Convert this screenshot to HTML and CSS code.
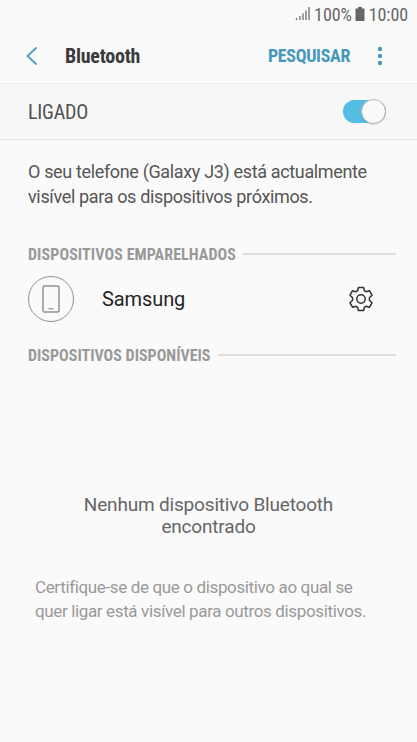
FILE: index.html
```html
<!DOCTYPE html>
<html lang="pt">
<head>
    <meta charset="UTF-8">
    <meta name="viewport" content="width=device-width, initial-scale=1.0">
    <title>Bluetooth</title>
    <link rel="stylesheet" href="styles.css">
</head>
<body>

<div class="status-bar">
    <svg class="signal" width="15" height="14" viewBox="0 0 15 14">
        <path d="M1.500 11v2M5 9v4M8 6.500v6.500M11 3.500v9.500M14 0v13" stroke="#777" stroke-width="1.400"/>
    </svg>
    <span class="percent">100%</span>
    <svg class="battery" width="10" height="14" viewBox="0 0 10 14">
        <path d="M3 0h4v1.500h2.500v12.500h-9v-12.500H3z" fill="#666"/>
    </svg>
    <span class="clock">10:00</span>
</div>

<header>
    <svg class="back" width="12" height="20" viewBox="0 0 12 20">
        <path d="M10.500 1.500L1.500 10l9 8.500" fill="none" stroke="#4a9fc2" stroke-width="1.800"/>
    </svg>
    <h1>Bluetooth</h1>
    <span class="search">PESQUISAR</span>
    <svg class="more" width="6" height="20" viewBox="0 0 6 20">
        <g fill="#4698ba">
            <circle cx="3" cy="3" r="2.200"/>
            <circle cx="3" cy="10" r="2.200"/>
            <circle cx="3" cy="17" r="2.200"/>
        </g>
    </svg>
</header>

<div class="switch-row">
    <span class="state">LIGADO</span>
    <div class="switch"><div class="knob"></div></div>
</div>

<main>
    <p class="info">O seu telefone (Galaxy J3) está actualmente<br>visível para os dispositivos próximos.</p>

    <h2 class="paired"><span>DISPOSITIVOS EMPARELHADOS</span></h2>
    <div class="device">
        <div class="device-icon">
            <svg width="18" height="28" viewBox="0 0 18 28">
                <rect x="1" y="1" width="16" height="26" rx="1.500" fill="none" stroke="#929292" stroke-width="1.500"/>
                <path d="M6.500 23.700h5" stroke="#929292" stroke-width="1.200"/>
            </svg>
        </div>
        <span class="device-name">Samsung</span>
        <svg class="gear" width="26" height="26" viewBox="0 0 26 26" fill="none" stroke="#303030" stroke-width="1.500" stroke-linejoin="round">
            <path d="M10.400 1.500h5.200l.8 3.200q.9.300 1.700 1l3.300-1 2.600 4.500-2.400 2.300q-.6 1.500 0 3l2.400 2.300-2.600 4.500-3.300-1q-.8.700-1.700 1l-.8 3.200h-5.200l-.8-3.200q-.9-.3-1.700-1l-3.300 1L2 16.800l2.400-2.300q.6-1.500 0-3L2 9.200l2.600-4.500 3.300 1q.8-.7 1.700-1z"/>
            <circle cx="13" cy="13" r="4.200"/>
        </svg>
    </div>

    <h2 class="available"><span>DISPOSITIVOS DISPONÍVEIS</span></h2>
    <p class="empty">Nenhum dispositivo Bluetooth<br>encontrado</p>
    <p class="hint">Certifique-se de que o dispositivo ao qual se<br>quer ligar está visível para outros dispositivos.</p>
</main>

</body>
</html>
```

FILE: styles.css
```css
* {
    margin: 0;
    padding: 0;
    box-sizing: border-box;
}

body {
    font-family: Roboto, sans-serif;
    background: #fafafa;
    color: #555;
    height: 742px;
    overflow: hidden;
}

.status-bar,
header,
.switch-row,
h2 {
    font-family: "Roboto Condensed", Roboto, sans-serif;
    font-stretch: 75%;
    white-space: nowrap;
    display: flex;
    align-items: center;
}

.status-bar {
    height: 28px;
    padding-right: 9px;
    justify-content: flex-end;
    font-size: 18px;
    letter-spacing: -0.1px;
    color: #666;
}

.percent {
    margin: 0 3px 0 4px;
}

.clock {
    margin-left: 4px;
}

header {
    height: 56px;
    padding: 0 34px 0 26px;
    border-bottom: 1px solid #ececec;
}

h1 {
    font-size: 20px;
    font-weight: 700;
    letter-spacing: -0.25px;
    color: #3b3b3b;
    margin-left: 27px;
    flex: 1;
}

.search {
    font-size: 18px;
    font-weight: 700;
    letter-spacing: -0.35px;
    color: #4698ba;
    margin-right: 27px;
}

.switch-row {
    height: 56px;
    padding: 0 31px 0 28px;
    justify-content: space-between;
    background: #f7f7f7;
    border-bottom: 1px solid #e3e3e3;
}

.state {
    font-size: 20px;
    letter-spacing: -0.2px;
    color: #505050;
}

.switch {
    display: flex;
    align-items: center;
    justify-content: flex-end;
    width: 43px;
    height: 23px;
    border-radius: 12px;
    background: #55bde3;
}

.knob {
    flex: none;
    width: 25px;
    height: 25px;
    border-radius: 50%;
    background: #fafafa;
    border: 1px solid #b5b5b5;
    box-shadow: 0 1px 1px rgba(0, 0, 0, 0.1);
}

main {
    padding: 19px 21px 0 28px;
}

.info {
    font-size: 18px;
    line-height: 25px;
    letter-spacing: -0.35px;
}

h2 {
    height: 20px;
    font-size: 16px;
    font-weight: 700;
    color: #999;
}

h2::after {
    content: "";
    flex: 1;
    height: 2px;
    margin-left: 7px;
    background: #dedede;
}

.paired {
    margin-top: 35px;
    letter-spacing: 0.08px;
}

.device {
    display: flex;
    align-items: center;
    height: 68px;
    padding: 1px 22px 0 0;
}

.device-icon {
    display: flex;
    align-items: center;
    justify-content: center;
    width: 46px;
    height: 46px;
    border: 1px solid #929292;
    border-radius: 50%;
}

.device-name {
    flex: 1;
    margin-left: 28px;
    font-size: 20px;
    letter-spacing: -0.1px;
    color: #252525;
}

.available {
    margin-top: 13px;
}

.empty {
    margin: 129px -7px 0 -14px;
    font-size: 19px;
    line-height: 22px;
    letter-spacing: -0.18px;
    text-align: center;
    color: #666;
}

.hint {
    margin: 37px 0 0 7px;
    font-size: 17px;
    line-height: 24px;
    letter-spacing: -0.36px;
    color: #999;
}
```
